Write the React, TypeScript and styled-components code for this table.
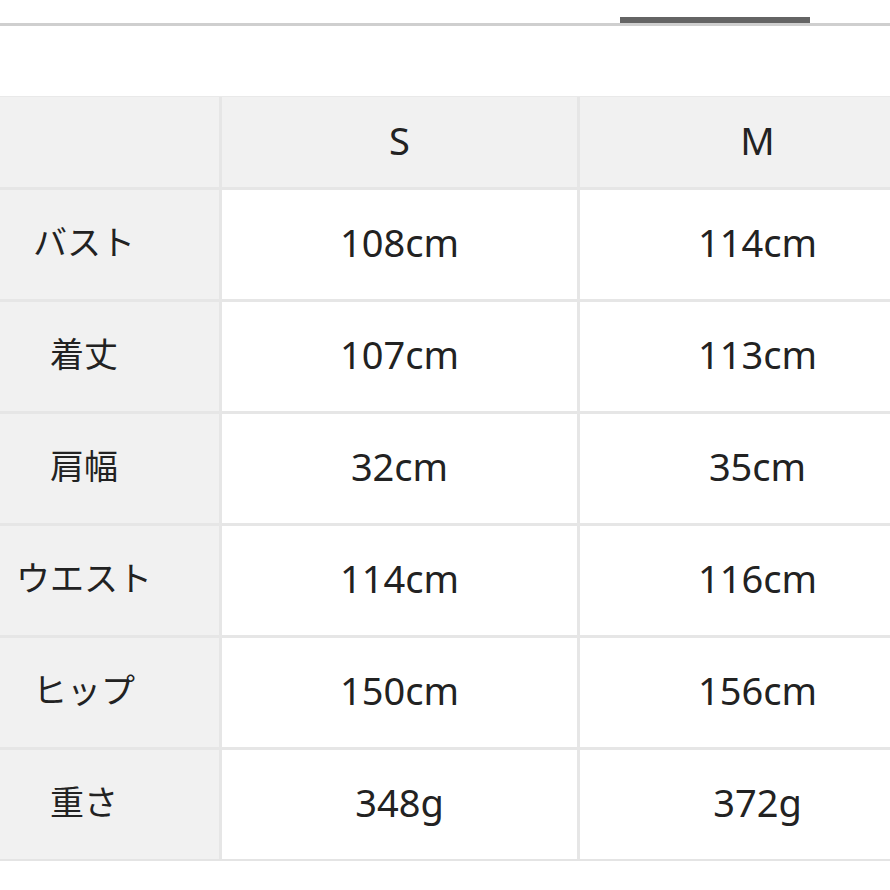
import React from "react";
import styled, { createGlobalStyle } from "styled-components";

const Global = createGlobalStyle`
  html, body { margin: 0; padding: 0; background: #ffffff; }
  body { font-family: "Noto Sans", "Noto Sans CJK JP", sans-serif; color: #1e1e1e; }
`;

const Page = styled.div`
  width: 890px;
  height: 890px;
  overflow: hidden;
  background: #fff;
  display: flex;
  flex-direction: column;
`;

const TabBar = styled.div`
  height: 26px;
  display: flex;
  align-items: flex-end;
  border-bottom: 3px solid #cfcfcf;
  box-sizing: border-box;
  padding-top: 17px;
`;

const TabIndicator = styled.div`
  margin-left: 620px;
  width: 190px;
  height: 6px;
  background: #646464;
`;

const Spacer = styled.div`
  height: 70px;
`;

const TableScroll = styled.div`
  width: 890px;
  overflow: hidden;
`;

const Grid = styled.div`
  display: grid;
  width: 935px;
  grid-template-columns: 219px 355px 355px;
  grid-template-rows: 90px repeat(6, 109px);
  gap: 3px;
  background: #e6e6e6;
  border-top: 1px solid #e9e9e9;
  border-bottom: 2px solid #e4e4e4;
`;

const Cell = styled.div<{ $shade?: boolean; $label?: boolean }>`
  background: ${(p) => (p.$shade ? "#f1f1f1" : "#ffffff")};
  display: flex;
  align-items: center;
  justify-content: center;
  padding-right: ${(p) => (p.$label ? "51px" : "0")};
  padding-bottom: 5px;
  box-sizing: border-box;
  font-size: ${(p) => (p.$label ? "34px" : "38px")};
  font-weight: 400;
  line-height: 1;
  color: #222;
  white-space: nowrap;
`;

const sizes = ["S", "M"];
const rows: [string, string, string][] = [
  ["バスト", "108cm", "114cm"],
  ["着丈", "107cm", "113cm"],
  ["肩幅", "32cm", "35cm"],
  ["ウエスト", "114cm", "116cm"],
  ["ヒップ", "150cm", "156cm"],
  ["重さ", "348g", "372g"],
];

export default function App() {
  return (
    <Page>
      <Global />
      <TabBar>
        <TabIndicator />
      </TabBar>
      <Spacer />
      <TableScroll>
        <Grid>
          <Cell $shade $label />
          {sizes.map((s) => (
            <Cell key={s} $shade>
              {s}
            </Cell>
          ))}
          {rows.map(([label, s, m]) => (
            <React.Fragment key={label}>
              <Cell $shade $label>
                {label}
              </Cell>
              <Cell>{s}</Cell>
              <Cell>{m}</Cell>
            </React.Fragment>
          ))}
        </Grid>
      </TableScroll>
    </Page>
  );
}
